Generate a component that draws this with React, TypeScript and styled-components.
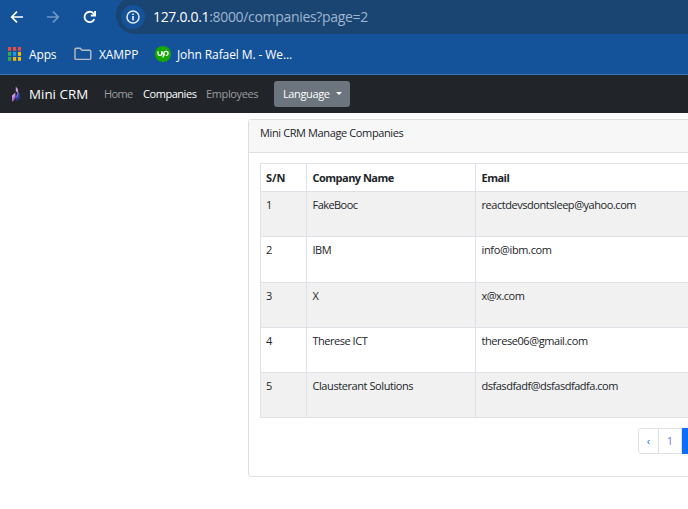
import React from 'react';
import styled, { createGlobalStyle } from 'styled-components';

const GlobalStyle = createGlobalStyle`
  * { box-sizing: border-box; }
  body {
    margin: 0;
    background: #fff;
    color: #212529;
    font: 11px/17px "Open Sans", "Noto Sans", sans-serif;
    overflow: hidden;
  }
`;

const Page = styled.div`
  width: 688px;
  height: 509px;
  overflow: hidden;
`;

/* Text run with its own tracking */
const Text = styled.span<{ $track?: number }>`
  letter-spacing: ${(p) => p.$track ?? -0.4}px;
  white-space: nowrap;
`;

const Browser = styled.header`
  height: 75px;
  background: #14529a;
  border-bottom: 1px solid #3d77b8;
  color: #fff;
`;

const AddressRow = styled.div`
  display: flex;
  height: 34px;
`;

const Controls = styled.div`
  display: flex;
  align-items: center;
  width: 116px;
  padding-left: 10px;
  gap: 22px;
  svg { display: block; flex: none; }
`;

const AddressBar = styled.div`
  display: flex;
  align-items: center;
  flex: 1;
  height: 38px;
  margin-top: -4px;
  padding-left: 5px;
  border-radius: 19px 0 0 19px;
  background: #1a4472;
`;

const InfoBadge = styled.div`
  display: grid;
  place-items: center;
  width: 24px;
  height: 24px;
  margin-top: 4px;
  border-radius: 50%;
  background: #14529a;
`;

const Url = styled.div`
  margin: 4px 0 0 8px;
  font-size: 14px;
  line-height: 20px;
  color: #9fb6d0;
  b { font-weight: 400; color: #fff; }
`;

const Bookmarks = styled.div`
  display: flex;
  align-items: center;
  height: 40px;
  padding-left: 8px;
  font-size: 12px;
`;

const Bookmark = styled.div<{ $gap: number; $width: number }>`
  display: flex;
  align-items: center;
  gap: ${(p) => p.$gap}px;
  width: ${(p) => p.$width}px;
  svg { flex: none; }
`;

const Navbar = styled.nav`
  display: flex;
  align-items: center;
  height: 38px;
  padding-left: 10px;
  background: #212529;
  color: #fff;
`;

const Brand = styled.div`
  display: flex;
  align-items: center;
  width: 94px;
  gap: 8px;
  font-size: 13.3px;
`;

const NavLink = styled.a<{ $active?: boolean; $width: number }>`
  width: ${(p) => p.$width}px;
  padding-bottom: 2px;
  color: ${(p) => (p.$active ? '#fff' : '#9b9d9f')};
`;

const Dropdown = styled.button`
  display: flex;
  align-items: center;
  gap: 6px;
  width: 76px;
  height: 26px;
  margin-left: 3px;
  padding: 0 0 2px 9px;
  border: 0;
  border-radius: 3px;
  background: #6c757d;
  color: #fff;
  font: inherit;
`;

const Caret = styled.i`
  border: 3px solid transparent;
  border-top-color: #fff;
  border-bottom: 0;
`;

const Card = styled.section`
  width: 520px;
  height: 358px;
  margin: 6px 0 0 248px;
  border: 1px solid #dfdfdf;
  border-radius: 3px;
`;

const CardHeader = styled.div`
  height: 33px;
  padding: 4px 11px;
  background: #f7f7f7;
  border-bottom: 1px solid #dfdfdf;
`;

const CardBody = styled.div`
  padding: 10px 11px;
`;

const Table = styled.div`
  border: 1px solid #dee2e6;
  border-bottom: 0;
`;

const Row = styled.div<{ $height: number; $striped?: boolean; $head?: boolean }>`
  display: grid;
  grid-template-columns: 46px 169px 1fr;
  height: ${(p) => p.$height}px;
  padding-top: ${(p) => (p.$head ? 0 : 0)}px;
  background: ${(p) => (p.$striped ? '#f1f1f1' : '#fff')};
  border-bottom: 1px solid #dee2e6;
  font-weight: ${(p) => (p.$head ? 700 : 400)};
  line-height: ${(p) => (p.$head ? 17 : 15)}px;
`;

const Cell = styled.div`
  padding: 5px;
  & + & { padding-left: 5.5px; }
  &:not(:last-child) { border-right: 1px solid #dee2e6; }
`;

const Pagination = styled.div`
  display: flex;
  margin: 10px 0 0 378px;
`;

const PageButton = styled.a<{ $active?: boolean; $first?: boolean; $width: number }>`
  display: flex;
  align-items: center;
  justify-content: center;
  width: ${(p) => p.$width}px;
  height: 26px;
  padding-bottom: 1px;
  border: 1px solid ${(p) => (p.$active ? '#0d6efd' : '#dee2e6')};
  border-left-width: ${(p) => (p.$first ? 1 : 0)}px;
  border-right-width: ${(p) => (p.$active ? 0 : 1)}px;
  border-radius: ${(p) => (p.$first ? '3px 0 0 3px' : '0')};
  background: ${(p) => (p.$active ? '#0d6efd' : '#fff')};
  color: ${(p) => (p.$first ? '#0d6efd' : '#7a78f5')};
`;

const Arrow = ({ faded }: { faded?: boolean }) => (
  <svg width="14" height="14" viewBox="0 0 14 14" fill="none" stroke={faded ? '#6e97c6' : '#fff'} strokeWidth="1.7">
    {faded ? <path d="M1 7h11M7 1.7 12.3 7 7 12.3" /> : <path d="M13 7H2M7 1.7 1.7 7 7 12.3" />}
  </svg>
);

const Reload = () => (
  <svg width="15" height="14" viewBox="0 0 15 14" fill="none" stroke="#fff" strokeWidth="1.8">
    <path d="M12.4 9.2A5.2 5.2 0 1 1 11.6 3.5L12.8 5" />
    <path d="M13.1 1v4.5H8.8" />
  </svg>
);

const Info = () => (
  <svg width="14" height="14" viewBox="0 0 14 14" fill="none" stroke="#e3ecf6" strokeWidth="1.5">
    <circle cx="7" cy="7" r="6" />
    <path d="M7 6v4.4M7 3.5v1.6" strokeWidth="1.7" />
  </svg>
);

const gridColors = ['#f04a3e', '#f04a3e', '#f04a3e', '#34a853', '#2196f3', '#fbbc05', '#34a853', '#fbb00a', '#fbbc05'];
const AppsGrid = () => (
  <svg width="13" height="14" viewBox="0 0 13 14">
    {gridColors.map((c, i) => (
      <rect key={i} x={(i % 3) * 5} y={Math.floor(i / 3) * 5} width="3.2" height="3.8" fill={c} />
    ))}
  </svg>
);

const Folder = () => (
  <svg width="18" height="14" viewBox="0 0 18 14" fill="none" stroke="#b9bdc4" strokeWidth="1.4">
    <path d="M1 11.2V2.4Q1 1.2 2.2 1.2H6.2L8 3.2H15.6Q16.8 3.2 16.8 4.4V11.2Q16.8 12.4 15.6 12.4H2.2Q1 12.4 1 11.2Z" />
  </svg>
);

const Upwork = () => (
  <svg width="16" height="16" viewBox="0 0 16 16" fill="none" stroke="#fff" strokeWidth="1.2">
    <circle cx="8" cy="8" r="8" fill="#14a800" stroke="none" />
    <path d="M3 5.2v2.3a1.9 1.9 0 0 0 3.8 0V5.2C7.2 7 8.2 8.6 10 9.4" />
    <path d="M7.9 11.5 8.9 7.2a2.1 2.1 0 1 1 1.9 2.3" />
  </svg>
);

const Flame = () => (
  <svg width="11" height="18" viewBox="0 0 11 18">
    <path d="M5.8 1.6 8 4.2V8L5.8 6.2Z" fill="#d39be0" />
    <path d="M2 10.6 5.3 7.6V12.5L2 16.5Z" fill="#d096df" />
    <path d="M2.2 13.4 5.3 10.6V13L2.6 17Z" fill="#a865cf" />
    <path d="M8 6.6 10 9V13.4L5.8 16V12Z" fill="#283b94" />
    <path d="M8 6.6 8.8 7.8 7.8 11.5 5.8 13Z" fill="#7874c0" />
  </svg>
);

const companies: [string, string, number, string, number][] = [
  ['1', 'FakeBooc', -0.55, 'reactdevsdontsleep@yahoo.com', -0.45],
  ['2', 'IBM', -0.5, 'info@ibm.com', -0.35],
  ['3', 'X', 0, 'x@x.com', -0.5],
  ['4', 'Therese ICT', -0.48, 'therese06@gmail.com', -0.42],
  ['5', 'Clausterant Solutions', -0.42, 'dsfasdfadf@dsfasdfadfa.com', -0.48],
];
const rowHeights = [45, 46, 45, 45, 45];

export default function App() {
  return (
    <Page>
      <GlobalStyle />
      <Browser>
        <AddressRow>
          <Controls>
            <Arrow />
            <Arrow faded />
            <Reload />
          </Controls>
          <AddressBar>
            <InfoBadge><Info /></InfoBadge>
            <Url><Text $track={-0.32}><b>127.0.0.1</b>:8000/companies?page=2</Text></Url>
          </AddressBar>
        </AddressRow>
        <Bookmarks>
          <Bookmark $gap={8} $width={66}><AppsGrid /><Text $track={-0.15}>Apps</Text></Bookmark>
          <Bookmark $gap={7} $width={81}><Folder /><Text $track={-0.1}>XAMPP</Text></Bookmark>
          <Bookmark $gap={6} $width={150}><Upwork /><Text $track={-0.1}>John Rafael M. - We...</Text></Bookmark>
        </Bookmarks>
      </Browser>
      <Navbar>
        <Brand><Flame /><Text $track={0.05}>Mini CRM</Text></Brand>
        <NavLink $width={39}><Text $track={-0.6}>Home</Text></NavLink>
        <NavLink $width={63} $active><Text $track={-0.45}>Companies</Text></NavLink>
        <NavLink $width={65}><Text $track={-0.38}>Employees</Text></NavLink>
        <Dropdown><Text $track={-0.38}>Language</Text><Caret /></Dropdown>
      </Navbar>
      <Card>
        <CardHeader><Text $track={-0.38}>Mini CRM Manage Companies</Text></CardHeader>
        <CardBody>
          <Table>
            <Row $height={28} $head>
              <Cell><Text $track={0}>S/N</Text></Cell>
              <Cell><Text $track={-0.52}>Company Name</Text></Cell>
              <Cell><Text $track={-0.52}>Email</Text></Cell>
            </Row>
            {companies.map(([id, name, nameTrack, email, emailTrack], i) => (
              <Row key={id} $height={rowHeights[i]} $striped={i % 2 === 0}>
                <Cell>{id}</Cell>
                <Cell><Text $track={nameTrack}>{name}</Text></Cell>
                <Cell><Text $track={emailTrack}>{email}</Text></Cell>
              </Row>
            ))}
          </Table>
          <Pagination>
            <PageButton $width={21} $first>‹</PageButton>
            <PageButton $width={23}>1</PageButton>
            <PageButton $width={23} $active />
          </Pagination>
        </CardBody>
      </Card>
    </Page>
  );
}
